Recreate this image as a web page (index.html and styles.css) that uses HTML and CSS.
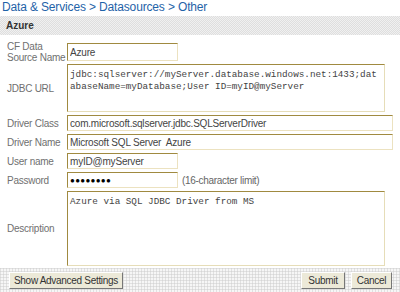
FILE: index.html
```html
<!DOCTYPE html>
<html>
<head>
<meta charset="utf-8">
<link rel="stylesheet" href="styles.css">
</head>
<body>
<h1 class="crumbs">Data &amp; Services &gt; Datasources &gt; Other</h1>
<div class="panel">
  <div class="panel-head">Azure</div>
  <div class="form">
    <label class="lbl lbl-two">CF Data<br>Source Name</label>
    <div class="field field-first"><input class="inp inp-short inp-first" type="text" value="Azure"></div>

    <label class="lbl">JDBC URL</label>
    <div class="field"><textarea class="ta ta-url">jdbc:sqlserver://myServer.database.windows.net:1433;databaseName=myDatabase;User ID=myID@myServer</textarea></div>

    <label class="lbl">Driver Class</label>
    <div class="field"><input class="inp inp-long" type="text" value="com.microsoft.sqlserver.jdbc.SQLServerDriver"></div>

    <label class="lbl">Driver Name</label>
    <div class="field"><input class="inp inp-long" type="text" value="Microsoft SQL Server  Azure"></div>

    <label class="lbl">User name</label>
    <div class="field"><input class="inp inp-short" type="text" value="myID@myServer"></div>

    <label class="lbl">Password</label>
    <div class="field"><input class="inp inp-short pw" type="text" value="●●●●●●●●"><span class="hint">(16-character limit)</span></div>

    <label class="lbl">Description</label>
    <div class="field"><textarea class="ta ta-desc">Azure via SQL JDBC Driver from MS</textarea></div>
  </div>
  <div class="actions">
    <button class="btn btn-adv" type="button">Show Advanced Settings</button>
    <div class="right">
      <button class="btn btn-submit" type="button">Submit</button>
      <button class="btn btn-cancel" type="button">Cancel</button>
    </div>
  </div>
</div>
</body>
</html>
```

FILE: styles.css
```css
html, body {
  margin: 0;
  padding: 0;
  background: #ffffff;
  width: 400px;
  height: 292px;
  overflow: hidden;
}
body {
  font-family: "Liberation Sans", Arial, sans-serif;
  font-size: 10px;
  color: #555;
}
.crumbs {
  margin: 0;
  padding: 0 0 0 2px;
  height: 16px;
  line-height: 14px;
  font-size: 12px;
  letter-spacing: -0.15px;
  font-weight: normal;
  color: #1f63a8;
}
.panel-head {
  height: 19px;
  line-height: 19px;
  padding-left: 6px;
  font-weight: bold;
  font-size: 10px;
  color: #333;
  background-color: #e8e8e8;
  background-image: repeating-conic-gradient(#dedede 0 25%, #f0f0f0 0 50%);
  background-size: 2px 2px;
}
.form {
  display: grid;
  grid-template-columns: 60px 1fr;
  column-gap: 0;
  row-gap: 3px;
  padding: 8px 0 0 7px;
}
.lbl {
  display: flex;
  align-items: center;
  white-space: nowrap;
  color: #707070;
  font-size: 10px;
  line-height: 11px;
  letter-spacing: -0.25px;
}
.lbl-two {
  margin-top: -3px;
  margin-bottom: -3px;
}
.field {
  display: flex;
  align-items: center;
}
.field-first {
  height: 18px;
}
.inp, .ta {
  box-sizing: border-box;
  margin: 0;
  border: 1px solid;
  border-color: #a08a40 #ece2c0 #ece2c0 #a08a40;
  background: #fff;
  color: #444;
  outline: none;
}
.inp {
  height: 16px;
  padding: 0 2px;
  font-family: "Liberation Sans", Arial, sans-serif;
  font-size: 10px;
  letter-spacing: -0.2px;
}
.inp-first {
  height: 18px;
}
.inp-short {
  width: 111px;
}
.inp-long {
  width: 326px;
}
.pw {
  color: #000;
  font-size: 8px;
  letter-spacing: 0.3px;
}
.hint {
  margin-left: 4px;
  color: #666;
  white-space: nowrap;
  letter-spacing: -0.3px;
}
.ta {
  display: block;
  resize: none;
  width: 318px;
  padding: 4px 2px 2px;
  font-family: "Liberation Mono", "Courier New", monospace;
  font-size: 9.3px;
  line-height: 12px;
  overflow: hidden;
  border-color: #a08a40 #e6ddb8 #e6ddb8 #a08a40;
}
.ta-url {
  height: 48px;
}
.ta-desc {
  height: 75px;
}
.actions {
  display: flex;
  justify-content: space-between;
  align-items: center;
  margin-top: 2px;
  height: 24px;
  padding: 0 8px 0 9px;
  background-color: #f6f6f6;
  background-image:
    linear-gradient(90deg, rgba(200,200,200,0.45) 1px, transparent 1px),
    linear-gradient(rgba(200,200,200,0.45) 1px, transparent 1px);
  background-size: 3px 3px;
}
.right {
  display: flex;
  gap: 6px;
}
.btn {
  box-sizing: border-box;
  height: 17px;
  margin: 0;
  padding: 0;
  font-family: "Liberation Sans", Arial, sans-serif;
  font-size: 10px;
  letter-spacing: -0.3px;
  color: #333;
  background: #ece9d8;
  border: 1px solid;
  border-color: #fff #777 #777 #fff;
}
.btn-adv {
  width: 114px;
}
.btn-submit {
  width: 44px;
}
.btn-cancel {
  width: 41px;
}
```
